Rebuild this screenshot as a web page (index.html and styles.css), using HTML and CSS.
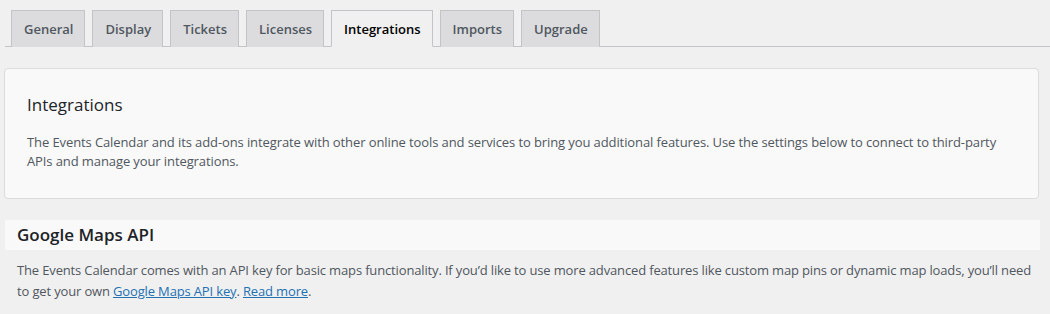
FILE: index.html
```html
<!DOCTYPE html>
<html lang="en">
<head>
  <meta charset="UTF-8" />
  <meta name="viewport" content="width=device-width, initial-scale=1.0"/>
  <title>Events Settings - Integrations</title>
  <link rel="stylesheet" href="styles.css">
</head>
<body>
  <div class="settings-wrap">
    <nav class="nav-tab-wrapper">
      <a class="nav-tab" href="#">General</a>
      <a class="nav-tab" href="#">Display</a>
      <a class="nav-tab" href="#">Tickets</a>
      <a class="nav-tab" href="#">Licenses</a>
      <a class="nav-tab nav-tab-active" href="#">Integrations</a>
      <a class="nav-tab" href="#">Imports</a>
      <a class="nav-tab" href="#">Upgrade</a>
    </nav>

    <div class="intro-box">
      <h2 class="intro-title">Integrations</h2>
      <p class="intro-text">The Events Calendar and its add-ons integrate with other online tools and services to bring you additional features. Use the settings below to connect to third-party APIs and manage your integrations.</p>
    </div>

    <div class="section">
      <h3 class="section-title">Google Maps API</h3>
      <p class="section-text">The Events Calendar comes with an API key for basic maps functionality. If you’d like to use more advanced features like custom map pins or dynamic map loads, you’ll need to get your own <a href="#">Google Maps API key</a>. <a href="#">Read more</a>.</p>
    </div>
  </div>
</body>
</html>
```

FILE: styles.css
```css
body {
  margin: 0;
  background-color: #f0f0f1;
  font-family: 'Open Sans', 'Noto Sans', sans-serif;
  color: #50575e;
}
.settings-wrap {
  padding: 10px 0 0 5px;
}
.nav-tab-wrapper {
  display: flex;
  gap: 7px;
  padding-left: 6px;
  border-bottom: 1px solid #c3c4c7;
}
.nav-tab {
  display: block;
  padding: 6px 11px 5px 12px;
  line-height: 25px;
  font-size: 13px;
  font-weight: 600;
  color: #50575e;
  text-decoration: none;
  background-color: #dcdcde;
  border: 1px solid #c3c4c7;
  border-bottom: none;
  margin-bottom: -1px;
}
.nav-tab-active {
  background-color: #f0f0f1;
  color: #000;
  border-bottom: 1px solid #f0f0f1;
  padding-bottom: 4px;
}
.intro-box {
  margin: 21px 11px 0 -1px;
  padding: 24px 22px 27px;
  background-color: #f9f9f9;
  border: 1px solid #dcdcde;
  border-radius: 4px;
}
.intro-title {
  margin: 0 0 16px;
  font-size: 17px;
  font-weight: 500;
  line-height: 24px;
  color: #1d2327;
}
.intro-text {
  margin: 0;
  font-size: 13px;
  line-height: 19px;
  letter-spacing: -0.1px;
}
.section {
  margin: 21px 10px 0 0;
}
.section-title {
  margin: 0;
  padding: 4px 12px;
  font-size: 17px;
  font-weight: 600;
  line-height: 22px;
  color: #1d2327;
  background-color: #f9f9f9;
}
.section-text {
  margin: 0;
  padding: 10px 2px 9px 12px;
  font-size: 13px;
  line-height: 21px;
  letter-spacing: -0.15px;
}
.section-text a {
  color: #2271b1;
}
```
